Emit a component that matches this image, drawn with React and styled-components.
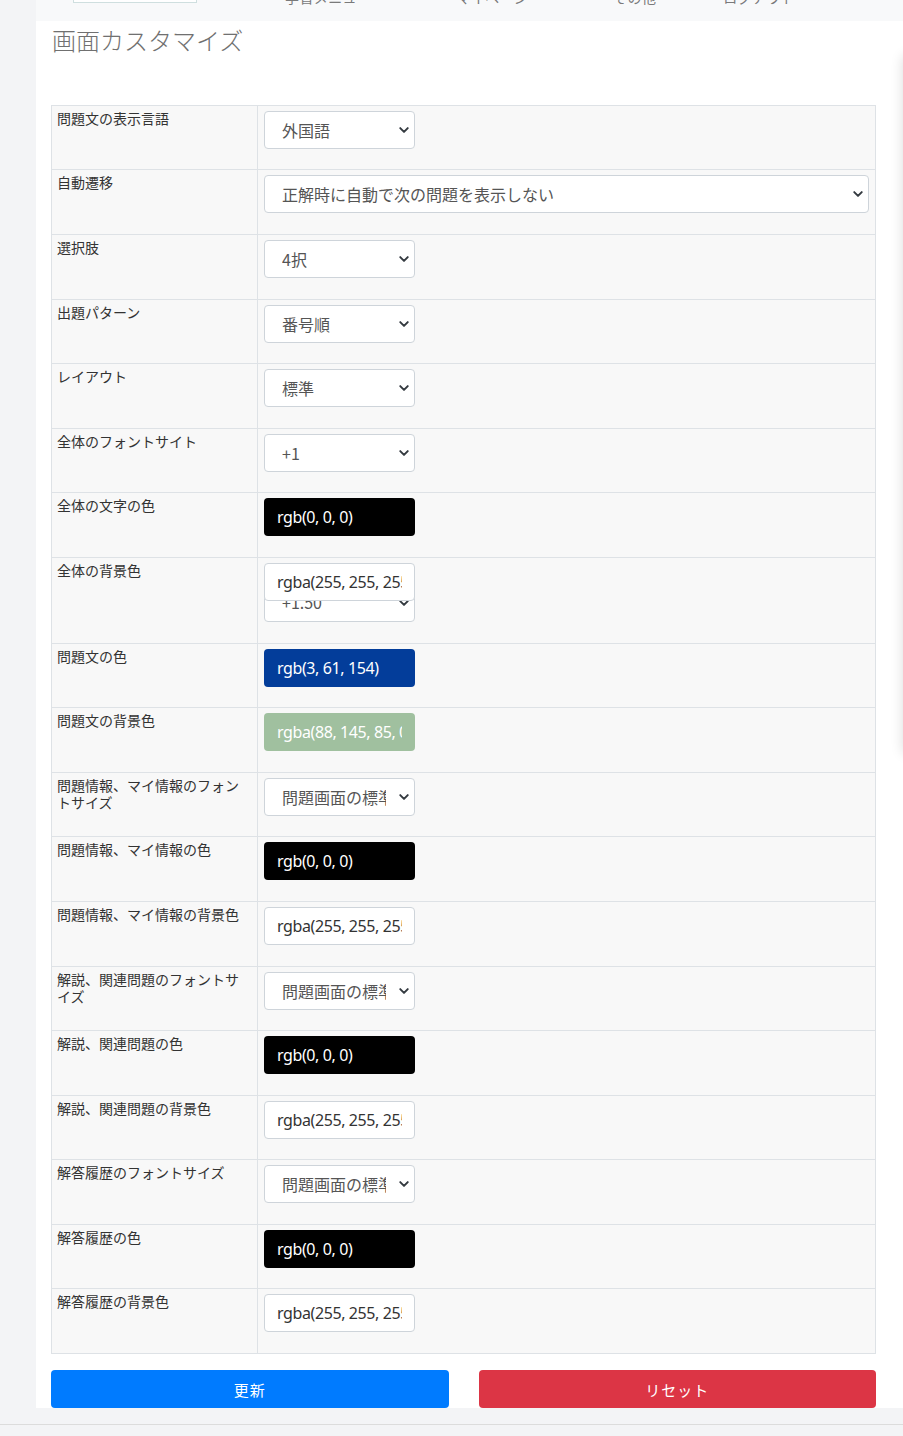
import React from 'react'
import styled, { createGlobalStyle } from 'styled-components'

const GlobalStyle = createGlobalStyle`
  html, body {
    margin: 0;
    padding: 0;
    background: #f3f4f6;
    overflow: hidden;
  }
  body {
    font-family: "Noto Sans CJK JP", "Noto Sans", sans-serif;
    color: #333;
  }
  * { box-sizing: border-box; }
`

const rows = [
  { label: '問題文の表示言語', kind: 'select', value: '外国語' },
  { label: '自動遷移', kind: 'select', value: '正解時に自動で次の問題を表示しない', wide: true },
  { label: '選択肢', kind: 'select', value: '4択' },
  { label: '出題パターン', kind: 'select', value: '番号順' },
  { label: 'レイアウト', kind: 'select', value: '標準' },
  { label: '全体のフォントサイト', kind: 'select', value: '+1' },
  { label: '全体の文字の色', kind: 'color', value: 'rgb(0, 0, 0)', bg: '#000', fg: '#fff' },
  { label: '全体の背景色', kind: 'color', value: 'rgba(255, 255, 255, 1)', bg: '#fff', fg: '#333', hidden: '+1.50' },
  { label: '問題文の色', kind: 'color', value: 'rgb(3, 61, 154)', bg: '#033d9a', fg: '#fff' },
  { label: '問題文の背景色', kind: 'color', value: 'rgba(88, 145, 85, 0.55)', bg: 'rgba(88, 145, 85, 0.55)', fg: '#fff' },
  { label: '問題情報、マイ情報のフォントサイズ', kind: 'select', value: '問題画面の標準サイズ' },
  { label: '問題情報、マイ情報の色', kind: 'color', value: 'rgb(0, 0, 0)', bg: '#000', fg: '#fff' },
  { label: '問題情報、マイ情報の背景色', kind: 'color', value: 'rgba(255, 255, 255, 1)', bg: '#fff', fg: '#333' },
  { label: '解説、関連問題のフォントサイズ', kind: 'select', value: '問題画面の標準サイズ' },
  { label: '解説、関連問題の色', kind: 'color', value: 'rgb(0, 0, 0)', bg: '#000', fg: '#fff' },
  { label: '解説、関連問題の背景色', kind: 'color', value: 'rgba(255, 255, 255, 1)', bg: '#fff', fg: '#333' },
  { label: '解答履歴のフォントサイズ', kind: 'select', value: '問題画面の標準サイズ' },
  { label: '解答履歴の色', kind: 'color', value: 'rgb(0, 0, 0)', bg: '#000', fg: '#fff' },
  { label: '解答履歴の背景色', kind: 'color', value: 'rgba(255, 255, 255, 1)', bg: '#fff', fg: '#333' },
]

const Chevron = () => (
  <svg width="12" height="12" viewBox="0 0 16 16" fill="none">
    <path d="M3 5.5l5 5 5-5" stroke="#343a40" strokeWidth="2.6" strokeLinecap="round" strokeLinejoin="round" />
  </svg>
)

const Caret = () => (
  <svg width="8" height="6" viewBox="0 0 8 6">
    <path d="M0 0h8L4 6z" fill="#8a8a8a" />
  </svg>
)

const SelectBox = ({ value, wide, under }) => (
  <SelectWrap wide={wide} under={under}>
    <Select defaultValue={value} under={under}>
      <option>{value}</option>
    </Select>
    <ChevronSpot><Chevron /></ChevronSpot>
  </SelectWrap>
)

const App = () => {
  return (
    <>
      <GlobalStyle />
      <Shell>
        <Navbar>
          <Logo />
          <NavList>
            <NavItem><Caret />学習メニュー</NavItem>
            <NavItem><Caret />マイページ</NavItem>
            <NavItem><Caret />その他</NavItem>
            <NavItem>ログアウト</NavItem>
          </NavList>
        </Navbar>

        <Main>
          <SidePanel />
          <Title>画面カスタマイズ</Title>
          <Table>
            <tbody>
              {rows.map((r) => (
                <Row key={r.label}>
                  <LabelCell>{r.label}</LabelCell>
                  <ValueCell>
                    {r.kind === 'select' ? (
                      <SelectBox value={r.value} wide={r.wide} />
                    ) : (
                      <>
                        <ColorInput defaultValue={r.value} bg={r.bg} fg={r.fg} readOnly />
                        {r.hidden && <SelectBox value={r.hidden} under />}
                      </>
                    )}
                  </ValueCell>
                </Row>
              ))}
            </tbody>
          </Table>

          <ButtonRow>
            <ActionButton bg="#007bff">更新</ActionButton>
            <ActionButton bg="#dc3545">リセット</ActionButton>
          </ButtonRow>
        </Main>
      </Shell>
      <Footer />
    </>
  )
}

export default App

const Shell = styled.div`
  padding-left: 36px;
`

const Navbar = styled.nav`
  height: 21px;
  background: #f8f9fa;
  display: flex;
  align-items: flex-end;
  padding: 0 0 17px 37px;
  overflow: hidden;
`

const Logo = styled.div`
  flex: none;
  width: 124px;
  height: 40px;
  margin-bottom: 1px;
  border: 1px solid #cfdfdf;
  background: #fff;
`

const NavList = styled.ul`
  display: flex;
  align-items: flex-end;
  gap: 67px;
  margin: 0 0 0 70px;
  padding: 0;
  list-style: none;
`

const NavItem = styled.li`
  display: flex;
  align-items: center;
  gap: 10px;
  font-size: 14px;
  line-height: 14px;
  color: #7a7a7a;
  letter-spacing: 0.4px;
  white-space: nowrap;
`

const Main = styled.main`
  position: relative;
  background: #fff;
  padding: 5px 27px 0 15px;
`

const SidePanel = styled.div`
  position: absolute;
  top: 35px;
  right: -300px;
  width: 300px;
  height: 697px;
  background: #fff;
  box-shadow: 0 0 12px rgba(0, 0, 0, 0.14);
`

const Title = styled.h2`
  margin: 0 0 50px 1px;
  font-size: 24px;
  line-height: 1.2;
  font-weight: 300;
  color: #707070;
`

const Table = styled.table`
  width: 100%;
  border-collapse: collapse;
  background: #f8f8f8;
`

const Row = styled.tr``

const LabelCell = styled.td`
  width: 206px;
  vertical-align: top;
  padding: 4px 8px 0 5px;
  border: 1px solid #dee2e6;
  font-size: 14px;
  line-height: 1.25;
  color: #333;
`

const ValueCell = styled.td`
  vertical-align: top;
  padding: 5px 6px 20.6px 6px;
  border: 1px solid #dee2e6;
`

const SelectWrap = styled.div`
  position: relative;
  width: ${({ wide }) => (wide ? '100%' : '151px')};
  margin-top: ${({ under }) => (under ? '-17px' : '0')};
`

const Select = styled.select`
  appearance: none;
  display: block;
  width: 100%;
  height: 38px;
  padding: ${({ under }) => (under ? '0 28px 2px 17px' : '0 28px 0 17px')};
  border: 1px solid #ced4da;
  border-radius: 4px;
  background: #fff;
  font-family: "Noto Sans CJK JP", "Noto Sans", sans-serif;
  font-size: 16px;
  color: #555;
  outline: none;
`

const ChevronSpot = styled.span`
  position: absolute;
  right: 5px;
  top: 50%;
  transform: translateY(-50%);
  display: flex;
  pointer-events: none;
`

const ColorInput = styled.input`
  position: relative;
  z-index: 1;
  display: block;
  width: 151px;
  height: 38px;
  padding: 0 12px;
  border: 1px solid ${({ bg }) => (bg === '#fff' ? '#ced4da' : 'transparent')};
  border-radius: 4px;
  background: ${({ bg }) => bg};
  color: ${({ fg }) => fg};
  font-family: "Noto Sans", "Noto Sans CJK JP", sans-serif;
  font-size: 16px;
  letter-spacing: -0.4px;
  outline: none;
`

const ButtonRow = styled.div`
  display: grid;
  grid-template-columns: 1fr 1fr;
  gap: 30px;
  margin-top: 16px;
`

const ActionButton = styled.button`
  height: 38px;
  border: none;
  border-radius: 4px;
  background: ${({ bg }) => bg};
  color: #fff;
  font-family: "Noto Sans CJK JP", "Noto Sans", sans-serif;
  font-size: 15px;
  letter-spacing: 1px;
  cursor: pointer;
`

const Footer = styled.footer`
  margin-top: 16px;
  height: 40px;
  border-top: 1px solid #dcdcdc;
  background: #f3f4f6;
`
